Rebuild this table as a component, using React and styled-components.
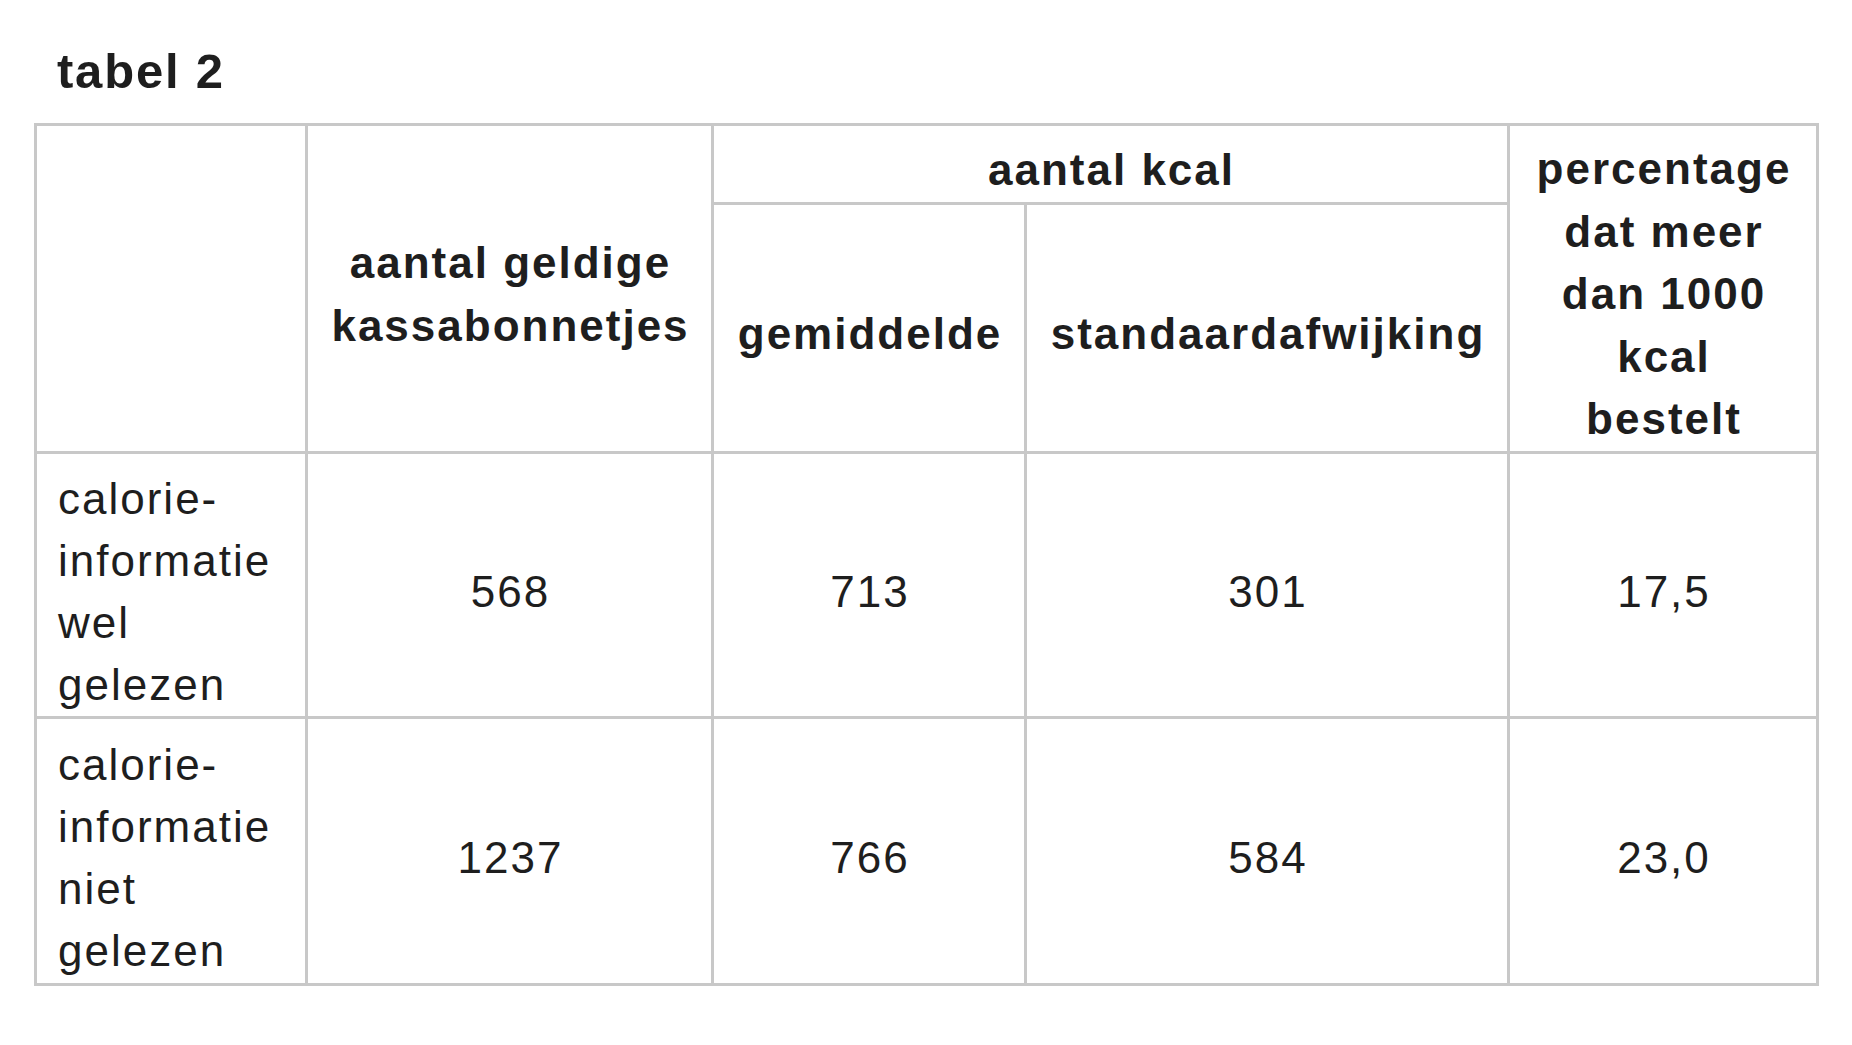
import React from "react";
import styled, { createGlobalStyle } from "styled-components";

const GlobalStyle = createGlobalStyle`
  html, body {
    margin: 0;
    padding: 0;
    background: #ffffff;
  }
  body {
    font-family: "Liberation Sans", Arial, Helvetica, sans-serif;
    color: #1e1e1e;
  }
`;

const Page = styled.main`
  padding: 43px 0 0 34px;
`;

const Title = styled.h2`
  margin: 0 0 24px 23px;
  font-size: 49px;
  line-height: 56px;
  font-weight: 700;
  letter-spacing: 1.8px;
  color: #1e1e1e;
`;

const Table = styled.div`
  display: grid;
  width: max-content;
  grid-template-columns: 268px 403px 310px 480px 306px;
  grid-template-rows: 76px 246px 262px 264px;
  gap: 3px;
  padding: 3px;
  background: #c8c8c8;
`;

const Cell = styled.div`
  display: flex;
  flex-direction: column;
  justify-content: center;
  align-items: ${(p) => (p.$left ? "flex-start" : "center")};
  text-align: ${(p) => (p.$left ? "left" : "center")};
  background: #ffffff;
  box-sizing: border-box;
  padding: ${(p) => (p.$head ? "12px 0 0 2px" : p.$left ? "14px 0 0 21px" : "14px 0 0 2px")};
  font-size: 44px;
  font-weight: ${(p) => (p.$head ? 700 : 400)};
  line-height: ${(p) => (p.$head ? "62.5px" : "62px")};
  letter-spacing: 2px;
  white-space: nowrap;
  grid-row: ${(p) => (p.$rowSpan ? `span ${p.$rowSpan}` : "auto")};
  grid-column: ${(p) => (p.$colSpan ? `span ${p.$colSpan}` : "auto")};
`;

const rows = [
  { label: ["calorie-", "informatie", "wel", "gelezen"], values: ["568", "713", "301", "17,5"] },
  { label: ["calorie-", "informatie", "niet", "gelezen"], values: ["1237", "766", "584", "23,0"] },
];

const Lines = ({ lines }) =>
  lines.map((l, i) => (
    <React.Fragment key={i}>
      {i > 0 && <br />}
      {l}
    </React.Fragment>
  ));

export default function App() {
  return (
    <>
      <GlobalStyle />
      <Page>
        <Title>tabel 2</Title>
        <Table>
          <Cell $head $rowSpan={2} />
          <Cell $head $rowSpan={2}>
            <div>
              <Lines lines={["aantal geldige", "kassabonnetjes"]} />
            </div>
          </Cell>
          <Cell $head $colSpan={2}>aantal kcal</Cell>
          <Cell $head $rowSpan={2}>
            <div>
              <Lines lines={["percentage", "dat meer", "dan 1000", "kcal", "bestelt"]} />
            </div>
          </Cell>
          <Cell $head>gemiddelde</Cell>
          <Cell $head>standaardafwijking</Cell>
          {rows.map((r, i) => (
            <React.Fragment key={i}>
              <Cell $left>
                <div>
                  <Lines lines={r.label} />
                </div>
              </Cell>
              {r.values.map((v, j) => (
                <Cell key={j}>{v}</Cell>
              ))}
            </React.Fragment>
          ))}
        </Table>
      </Page>
    </>
  );
}
